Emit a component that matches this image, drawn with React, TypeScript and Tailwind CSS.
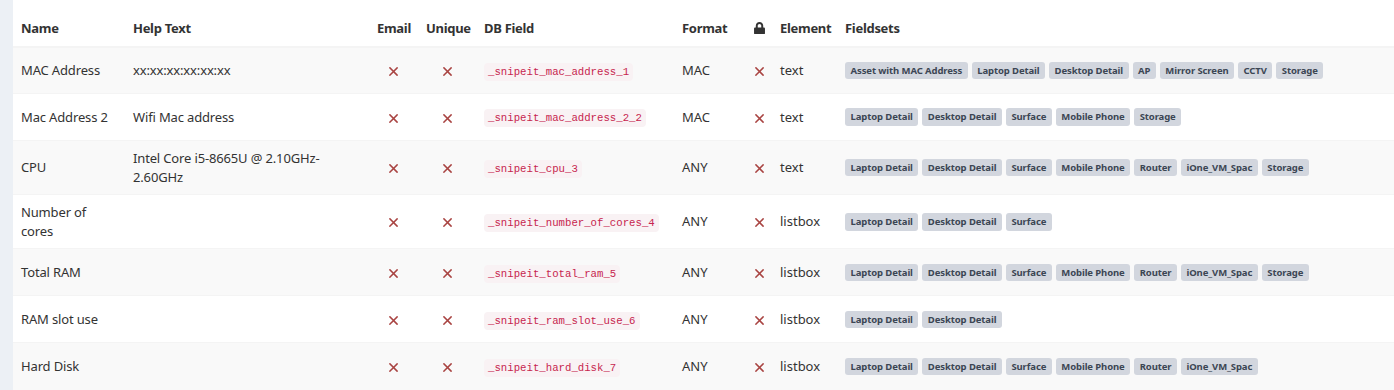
import React from 'react'

type Field = {
  name: string
  help: string
  db: string
  format: string
  element: string
  fieldsets: string[]
}

const FIELDS: Field[] = [
  {
    name: 'MAC Address',
    help: 'xx:xx:xx:xx:xx:xx',
    db: '_snipeit_mac_address_1',
    format: 'MAC',
    element: 'text',
    fieldsets: ['Asset with MAC Address', 'Laptop Detail', 'Desktop Detail', 'AP', 'Mirror Screen', 'CCTV', 'Storage'],
  },
  {
    name: 'Mac Address 2',
    help: 'Wifi Mac address',
    db: '_snipeit_mac_address_2_2',
    format: 'MAC',
    element: 'text',
    fieldsets: ['Laptop Detail', 'Desktop Detail', 'Surface', 'Mobile Phone', 'Storage'],
  },
  {
    name: 'CPU',
    help: 'Intel Core i5-8665U @ 2.10GHz-2.60GHz',
    db: '_snipeit_cpu_3',
    format: 'ANY',
    element: 'text',
    fieldsets: ['Laptop Detail', 'Desktop Detail', 'Surface', 'Mobile Phone', 'Router', 'iOne_VM_Spac', 'Storage'],
  },
  {
    name: 'Number of cores',
    help: '',
    db: '_snipeit_number_of_cores_4',
    format: 'ANY',
    element: 'listbox',
    fieldsets: ['Laptop Detail', 'Desktop Detail', 'Surface'],
  },
  {
    name: 'Total RAM',
    help: '',
    db: '_snipeit_total_ram_5',
    format: 'ANY',
    element: 'listbox',
    fieldsets: ['Laptop Detail', 'Desktop Detail', 'Surface', 'Mobile Phone', 'Router', 'iOne_VM_Spac', 'Storage'],
  },
  {
    name: 'RAM slot use',
    help: '',
    db: '_snipeit_ram_slot_use_6',
    format: 'ANY',
    element: 'listbox',
    fieldsets: ['Laptop Detail', 'Desktop Detail'],
  },
  {
    name: 'Hard Disk',
    help: '',
    db: '_snipeit_hard_disk_7',
    format: 'ANY',
    element: 'listbox',
    fieldsets: ['Laptop Detail', 'Desktop Detail', 'Surface', 'Mobile Phone', 'Router', 'iOne_VM_Spac'],
  },
]

function Times() {
  return (
    <svg viewBox="0 0 10 10" className="inline-block w-[9px] h-[9px] align-middle">
      <path d="M1 1L9 9M9 1L1 9" stroke="#a94442" strokeWidth="1.7" strokeLinecap="square" fill="none" />
    </svg>
  )
}

function Lock() {
  return (
    <svg viewBox="0 0 448 512" className="inline-block w-[11px] h-[12.5px] align-[-1px]">
      <path
        fill="#333"
        d="M400 224h-24v-72C376 68.2 307.8 0 224 0S72 68.2 72 152v72H48c-26.5 0-48 21.5-48 48v192c0 26.5 21.5 48 48 48h352c26.5 0 48-21.5 48-48V272c0-26.5-21.5-48-48-48zm-104 0H152v-72c0-39.7 32.3-72 72-72s72 32.3 72 72v72z"
      />
    </svg>
  )
}

const th = 'px-2 pt-[9px] pb-[8px] font-bold tracking-[-0.3px] text-left border-b-2 border-[#f4f4f4]'
const td = 'px-2 py-2 align-middle border-t border-[#f4f4f4]'

export default function App() {
  return (
    <div className="min-h-[390px] bg-[#ecf0f5] pl-[13px] font-['Noto_Sans',sans-serif] text-[13px] leading-[1.42857] text-[#333]">
      <div className="bg-white pt-[10px] min-h-[390px]">
        <table className="w-full table-fixed border-collapse">
          <colgroup>
            <col className="w-[112px]" />
            <col className="w-[244px]" />
            <col className="w-[49px]" />
            <col className="w-[58px]" />
            <col className="w-[198px]" />
            <col className="w-[72px]" />
            <col className="w-[26px]" />
            <col className="w-[65px]" />
            <col />
          </colgroup>
          <thead>
            <tr>
              <th className={th}>Name</th>
              <th className={th}>Help Text</th>
              <th className={`${th} !text-center`}>Email</th>
              <th className={`${th} !text-center`}>Unique</th>
              <th className={th}>DB Field</th>
              <th className={th}>Format</th>
              <th className={`${th} !text-center !px-0`}>
                <Lock />
              </th>
              <th className={th}>Element</th>
              <th className={th}>Fieldsets</th>
            </tr>
          </thead>
          <tbody>
            {FIELDS.map((f, i) => (
              <tr key={f.db} className={i % 2 === 0 ? 'bg-[#f9f9f9] h-[47px]' : 'bg-white h-[47px]'}>
                <td className={`${td} tracking-[-0.15px]`}>{f.name}</td>
                <td className={`${td} tracking-[-0.15px]`}>{f.help}</td>
                <td className={`${td} text-center`}>
                  <Times />
                </td>
                <td className={`${td} text-center`}>
                  <Times />
                </td>
                <td className={td}>
                  <code className="font-['Liberation_Mono',monospace] text-[10.7px] text-[#c7254e] bg-[#f9f2f4] rounded px-1 py-[3px]">
                    {f.db}
                  </code>
                </td>
                <td className={td}>{f.format}</td>
                <td className={`${td} text-center !px-0`}>
                  <Times />
                </td>
                <td className={td}>{f.element}</td>
                <td className={td}>
                  <div className="flex flex-wrap gap-1">
                    {f.fieldsets.map((s) => (
                      <span
                        key={s}
                        className="inline-block bg-[#d2d6de] text-[#3c4654] font-bold text-[9.5px] leading-none tracking-[-0.1px] rounded-[3px] px-[5.5px] pt-[4px] pb-[4px]"
                      >
                        {s}
                      </span>
                    ))}
                  </div>
                </td>
              </tr>
            ))}
          </tbody>
        </table>
      </div>
    </div>
  )
}
